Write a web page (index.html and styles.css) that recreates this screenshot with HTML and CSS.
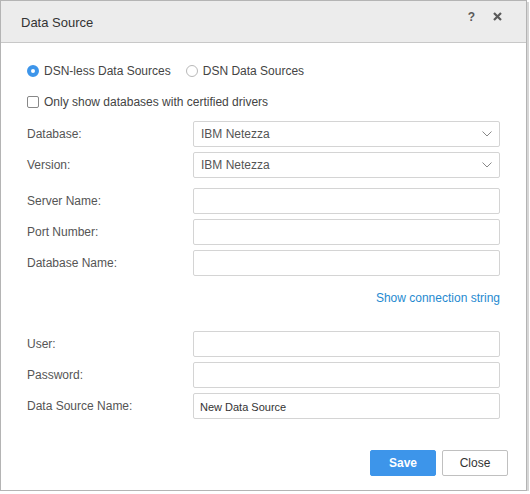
FILE: index.html
```
<!DOCTYPE html>
<html>
<head>
<meta charset="utf-8">
<link rel="stylesheet" href="styles.css">
</head>
<body>
<div class="dialog">
  <div class="header">
    <span class="title">Data Source</span>
    <div class="tools">
      <span class="help">?</span>
      <svg class="close-x" width="9" height="9" viewBox="0 0 9 9"><path d="M1 1 L8 8 M8 1 L1 8" stroke="#5a5a5a" stroke-width="2.2" stroke-linecap="butt"/></svg>
    </div>
  </div>
  <div class="content">
    <div class="radio-row">
      <label class="opt"><span class="radio on"></span>DSN-less Data Sources</label>
      <label class="opt"><span class="radio"></span>DSN Data Sources</label>
    </div>
    <div class="check-row">
      <label class="opt"><span class="check"></span>Only show databases with certified drivers</label>
    </div>
    <div class="fields">
      <div class="field"><span class="lbl">Database:</span><div class="box select"><span>IBM Netezza</span><svg width="10" height="6" viewBox="0 0 10 6"><path d="M0.5 0.5 L5 5 L9.5 0.5" fill="none" stroke="#888" stroke-width="1"/></svg></div></div>
      <div class="field"><span class="lbl">Version:</span><div class="box select"><span>IBM Netezza</span><svg width="10" height="6" viewBox="0 0 10 6"><path d="M0.5 0.5 L5 5 L9.5 0.5" fill="none" stroke="#888" stroke-width="1"/></svg></div></div>
    </div>
    <div class="fields second">
      <div class="field"><span class="lbl">Server Name:</span><input class="box" type="text"></div>
      <div class="field"><span class="lbl">Port Number:</span><input class="box" type="text"></div>
      <div class="field"><span class="lbl">Database Name:</span><input class="box" type="text"></div>
      <div class="link-row"><a class="link">Show connection string</a></div>
      <div class="field"><span class="lbl">User:</span><input class="box" type="text"></div>
      <div class="field"><span class="lbl">Password:</span><input class="box" type="password"></div>
      <div class="field"><span class="lbl">Data Source Name:</span><input class="box small" type="text" value="New Data Source"></div>
    </div>
    <div class="footer">
      <button class="btn primary">Save</button>
      <button class="btn">Close</button>
    </div>
  </div>
</div>
</body>
</html>
```
FILE: styles.css
```
* { box-sizing: border-box; }
html, body { margin: 0; padding: 0; background: #fff; }
body { font-family: "Liberation Sans", Arial, sans-serif; font-size: 12px; color: #555; }
.dialog {
  width: 527px;
  height: 491px;
  border: 1px solid #b4b4b4;
  box-shadow: 2px 2px 0 #d6d6d6;
  background: #fff;
  display: flex;
  flex-direction: column;
}
.header {
  height: 42px;
  background: #ececec;
  border-bottom: 1px solid #c8c8c8;
  display: flex;
  align-items: center;
  justify-content: space-between;
  padding: 0 24px 0 20px;
  flex: none;
}
.title { font-size: 13px; color: #333; padding-top: 2px; }
.tools { display: flex; align-items: center; gap: 18px; margin-top: -10px; }
.help { font-size: 12px; font-weight: bold; color: #5a5a5a; }
.close-x { display: block; }
.content {
  padding: 20px 26px 0 26px;
  display: flex;
  flex-direction: column;
  flex: 1;
}
.radio-row { display: flex; gap: 15px; height: 16px; align-items: center; color: #444; }
.opt { display: flex; align-items: center; gap: 5px; }
.radio {
  width: 12px; height: 12px; border-radius: 50%;
  border: 1px solid #b8b8b8; background: #fff; display: inline-block;
}
.radio.on { border: 4px solid #3d95ea; }
.check-row { margin-top: 15px; height: 16px; display: flex; align-items: center; color: #444; }
.check {
  width: 12px; height: 12px; border: 1px solid #888; border-radius: 2px; display: inline-block; background: #fff;
}
.fields { display: flex; flex-direction: column; gap: 5px; margin-top: 11px; }
.fields.second { margin-top: 10px; }
.field { display: flex; align-items: center; height: 26px; }
.lbl { width: 166px; flex: none; color: #555; }
.box {
  flex: 1;
  height: 26px;
  border: 1px solid #d4d4d4;
  border-radius: 2px;
  background: #fff;
  font-family: "Liberation Sans", Arial, sans-serif;
  font-size: 12px;
  color: #555;
  padding: 0 7px;
  margin: 0;
  outline: none;
}
.select { display: flex; align-items: center; justify-content: space-between; padding-right: 7px; }
.box.small { font-size: 11px; color: #333; padding-left: 6px; padding-top: 2px; }
.link-row { display: flex; justify-content: flex-end; padding-top: 9px; padding-bottom: 20px; height: 45px; }
.link { color: #1f8ad0; line-height: 16px; }
.footer { display: flex; justify-content: flex-end; gap: 6px; margin-top: 31px; margin-right: -8px; }
.btn {
  width: 66px; height: 26px;
  border: 1px solid #c0c0c0;
  border-radius: 2px;
  background: #fff;
  color: #333;
  font-family: "Liberation Sans", Arial, sans-serif;
  font-size: 12px;
  padding: 0;
}
.btn.primary { background: #3d95ea; border-color: #3d95ea; color: #fff; font-weight: bold; }
```
